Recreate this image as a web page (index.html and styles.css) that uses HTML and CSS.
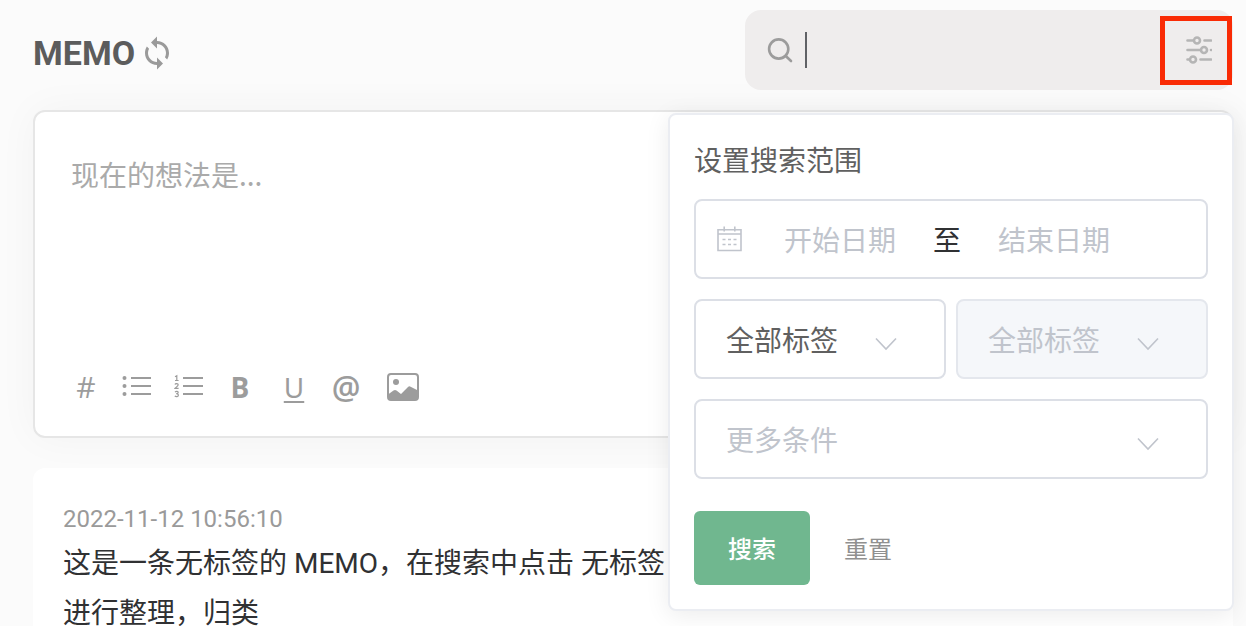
FILE: index.html
```
<!DOCTYPE html>
<html lang="zh-CN">
<head>
<meta charset="utf-8">
<meta name="viewport" content="width=device-width, initial-scale=1">
<title>MEMO</title>
<link rel="stylesheet" href="styles.css">
</head>
<body>
<div class="page">
  <header class="header">
    <div class="brand">
      <h1 class="brand-name">MEMO</h1>
      <button class="icon-button" type="button" aria-label="刷新">
        <svg class="sync-icon" viewBox="0 0 24 24" aria-hidden="true"><path fill="currentColor" d="M12 4V1L8 5l4 4V6c3.31 0 6 2.69 6 6 0 1.01-.25 1.97-.7 2.8l1.46 1.46C19.54 15.03 20 13.57 20 12c0-4.42-3.58-8-8-8zm0 14c-3.31 0-6-2.69-6-6 0-1.01.25-1.97.7-2.8L5.24 7.74C4.46 8.97 4 10.43 4 12c0 4.42 3.58 8 8 8v3l4-4-4-4v3z"/></svg>
      </button>
    </div>
    <div class="search">
      <svg class="search-icon" viewBox="0 0 28 28" aria-hidden="true"><g fill="none" stroke="currentColor" stroke-width="2.6" stroke-linecap="round"><circle cx="12.700" cy="13" r="9.600"/><path d="M19.500 19.800L25 25"/></g></svg>
      <span class="caret"></span>
      <input class="search-input" type="text" aria-label="搜索">
      <button class="filter-button" type="button" aria-label="设置搜索范围">
        <svg class="filter-icon" viewBox="0 0 32 28" aria-hidden="true"><g fill="none" stroke="currentColor" stroke-width="2.600" stroke-linecap="round"><path d="M7.500 4.500h6M24.500 4.500h6.500M7.500 14h13M31 14h.2M7.500 23.500h2M20.500 23.500h10.500"/><circle cx="17" cy="4.500" r="3"/><circle cx="24" cy="14" r="3"/><circle cx="13" cy="23.500" r="3"/></g></svg>
      </button>

      <form class="panel">
        <h2 class="panel-title">设置搜索范围</h2>
        <div class="fields">
          <div class="field date-range">
            <svg class="calendar-icon" viewBox="0 0 26 28" aria-hidden="true"><g fill="none" stroke="currentColor" stroke-width="1.600"><path d="M2 4.800h23v20.700H2zM2 9h23M8.200 1.500v5M18.800 1.500v5"/><path d="M6.500 14.500h3M12 14.500h3M17.500 14.500h3M6.500 19.500h3M12 19.500h3M17.500 19.500h3"/></g></svg>
            <input class="date-input" type="text" placeholder="开始日期" aria-label="开始日期">
            <span class="date-separator">至</span>
            <input class="date-input" type="text" placeholder="结束日期" aria-label="结束日期">
          </div>
          <div class="tag-row">
            <div class="select-wrap">
              <select class="field select" aria-label="标签"><option>全部标签</option></select>
              <svg class="chevron" viewBox="0 0 24 14" aria-hidden="true"><path d="M2 1.500l10 10.500L22 1.500"/></svg>
            </div>
            <div class="select-wrap">
              <select class="field select" aria-label="子标签" disabled><option>全部标签</option></select>
              <svg class="chevron" viewBox="0 0 24 14" aria-hidden="true"><path d="M2 1.500l10 10.500L22 1.500"/></svg>
            </div>
          </div>
          <div class="select-wrap">
            <select class="field select select-empty" aria-label="更多条件"><option>更多条件</option></select>
            <svg class="chevron" viewBox="0 0 24 14" aria-hidden="true"><path d="M2 1.500l10 10.500L22 1.500"/></svg>
          </div>
        </div>
        <div class="actions">
          <button class="submit" type="button">搜索</button>
          <button class="reset" type="reset">重置</button>
        </div>
      </form>
    </div>
  </header>

  <main class="content">
    <section class="editor">
      <textarea class="editor-input" placeholder="现在的想法是..." aria-label="现在的想法是"></textarea>
      <div class="toolbar">
        <button class="tool tool-hash" type="button" aria-label="标签">#</button>
        <button class="tool" type="button" aria-label="无序列表">
          <svg class="tool-icon" viewBox="0 0 32 32" aria-hidden="true"><g fill="currentColor"><circle cx="2.500" cy="7" r="2"/><circle cx="2.500" cy="15" r="2"/><circle cx="2.500" cy="23" r="2"/><path d="M9 6h20v2H9zM9 14h20v2H9zM9 22h20v2H9z"/></g></svg>
        </button>
        <button class="tool" type="button" aria-label="有序列表">
          <svg class="tool-icon" viewBox="0 0 32 32" aria-hidden="true"><path fill="currentColor" d="M9 6h20v2H9zM9 14h20v2H9zM9 22h20v2H9z"/><path fill="none" stroke="currentColor" stroke-width="1.200" d="M1 5.800L2.800 4.800V9.500M1 9.500h3.600M1 13.500c.3-1.300 3.200-1.300 3.200.3C4.200 15 2 16.200 1 17.400h3.600M1 21c1.200-1 3.200-.7 3.200.5 0 1-1 1.200-2 1.200 1 0 2.200.4 2.200 1.500 0 1.600-2.400 1.800-3.600.8"/></svg>
        </button>
        <button class="tool tool-bold" type="button" aria-label="加粗">B</button>
        <button class="tool tool-underline" type="button" aria-label="下划线">U</button>
        <button class="tool tool-mention" type="button" aria-label="提及">@</button>
        <button class="tool tool-image" type="button" aria-label="图片">
          <svg class="tool-icon" viewBox="0 0 32 32" aria-hidden="true"><rect x="1" y="3" width="30" height="26" rx="3" fill="none" stroke="currentColor" stroke-width="2"/><circle cx="9" cy="11" r="3" fill="currentColor"/><path fill="currentColor" d="M1 23.500l5.500-4q1.500-1 3 0l4.500 3.500 7-7q1.200-1.200 2.600-.3L31 19.500V26a3 3 0 0 1-3 3H4a3 3 0 0 1-3-3z"/></svg>
        </button>
      </div>
    </section>
    <article class="memo">
      <time class="memo-time" datetime="2022-11-12T10:56:10">2022-11-12 10:56:10</time>
      <p class="memo-text">这是一条无标签的<span class="latin"> MEMO</span>，在搜索中点击<span class="latin"> </span>无标签<br>进行整理，归类</p>
    </article>
  </main>
</div>
</body>
</html>
```

FILE: styles.css
```
* {
  box-sizing: border-box;
}

body {
  margin: 0;
  background: #fbfbfb;
  color: #303133;
  font: 28px/40px "Noto Sans CJK SC", sans-serif;
}

button,
input,
select,
textarea {
  margin: 0;
  padding: 0;
  border: 0;
  background: transparent;
  color: inherit;
  font: inherit;
  outline: none;
}

.page {
  height: 100vh;
  overflow: hidden;
  padding: 10px 13px 0 33px;
}

.header {
  display: flex;
  align-items: center;
  justify-content: space-between;
  margin-bottom: 20px;
}

.brand {
  display: flex;
  align-items: center;
  gap: 4px;
  padding-top: 6px;
}

.brand-name {
  margin: 0;
  color: #5c5c5c;
  font: bold 34px/40px Roboto, sans-serif;
}

.icon-button {
  display: flex;
  color: #9a9a9a;
}

.sync-icon {
  width: 36px;
  height: 36px;
}

.search {
  position: relative;
  display: flex;
  align-items: center;
  width: 488px;
  height: 80px;
  padding: 0 1px 0 21px;
  border-radius: 16px;
  background: #efeded;
}

.search-icon {
  width: 28px;
  height: 28px;
  color: #9c9c9c;
}

.caret {
  width: 2px;
  height: 36px;
  margin-left: 11px;
  background: #606266;
}

.search-input {
  flex: 1;
  min-width: 0;
  height: 80px;
}

.filter-button {
  display: flex;
  align-items: center;
  justify-content: center;
  width: 72px;
  height: 69px;
  border: 5px solid #f92b05;
  color: #b5b5b5;
}

.filter-icon {
  width: 32px;
  height: 28px;
}

.panel {
  position: absolute;
  z-index: 1;
  top: 103px;
  right: -1px;
  width: 566px;
  padding: 24px;
  border: 2px solid #ebedf2;
  border-radius: 8px;
  background: #fff;
  box-shadow: 0 4px 24px rgba(0, 0, 0, 0.08);
}

.panel-title {
  margin: 0 0 20px;
  color: #606060;
  font-size: 28px;
  font-weight: 400;
  line-height: 40px;
}

.fields {
  display: grid;
  grid-template-columns: minmax(0, 1fr);
  gap: 20px;
}

.field {
  width: 100%;
  height: 80px;
  border: 2px solid #dcdfe6;
  border-radius: 8px;
}

.date-range {
  display: flex;
  align-items: center;
  padding: 0 59px 0 20px;
}

.calendar-icon {
  flex: none;
  width: 26px;
  height: 28px;
  margin-right: 5px;
  color: #c0c4cc;
}

.date-input {
  flex: 1;
  min-width: 0;
  height: 40px;
  text-align: center;
}

.date-input::placeholder {
  color: #c0c4cc;
}

.tag-row {
  display: grid;
  grid-template-columns: repeat(2, minmax(0, 1fr));
  gap: 10px;
}

.select-wrap {
  position: relative;
}

.select {
  display: block;
  padding: 0 30px;
  color: #606060;
  appearance: none;
}

.select:disabled {
  border-color: #e4e7ed;
  background: #f5f7fa;
  color: #c0c4cc;
  opacity: 1;
}

.select-empty {
  color: #c0c4cc;
}

.chevron {
  position: absolute;
  top: 38px;
  right: 48px;
  width: 24px;
  height: 14px;
  fill: none;
  stroke: #c0c4cc;
  stroke-width: 1.6px;
  pointer-events: none;
}

.actions {
  display: flex;
  gap: 34px;
  margin-top: 32px;
  font-size: 24px;
}

.submit {
  width: 116px;
  height: 74px;
  border-radius: 6px;
  background: #70b78f;
  color: #fff;
  font-weight: 500;
}

.reset {
  color: #909090;
}

.editor {
  border: 2px solid #e6e6e6;
  border-radius: 12px;
  background: #fff;
  box-shadow: 0 0 40px rgba(0, 0, 0, 0.04);
}

.editor-input {
  display: block;
  width: 100%;
  height: 247px;
  padding: 42px 36px 0;
  resize: none;
}

.editor-input::placeholder {
  color: #aaa;
}

.toolbar {
  display: flex;
  padding: 0 25px 21px;
  color: #9c9c9c;
}

.tool {
  display: flex;
  align-items: center;
  justify-content: center;
  width: 52px;
  height: 56px;
  font: 28px/40px "Open Sans", sans-serif;
}

.tool-hash {
  font-size: 30px;
}

.tool-bold {
  padding-right: 4px;
  font-weight: 700;
}

.tool-underline {
  font-family: "Noto Sans", sans-serif;
  font-weight: 400;
  text-decoration: underline 2px;
  text-underline-offset: 3px;
}

.tool-mention {
  font-size: 32px;
  font-weight: 600;
}

.tool-image {
  width: 62px;
}

.tool-icon {
  width: 32px;
  height: 32px;
}

.memo {
  margin-top: 30px;
  padding: 36px 30px;
  border-radius: 12px;
  background: #fff;
}

.memo-time {
  display: block;
  margin-bottom: 2px;
  color: #9a9a9a;
  font: 24px/30px Roboto, sans-serif;
}

.memo-text {
  margin: 0;
  line-height: 50px;
}

.latin {
  font-family: Roboto, sans-serif;
  line-height: 1;
}
```
